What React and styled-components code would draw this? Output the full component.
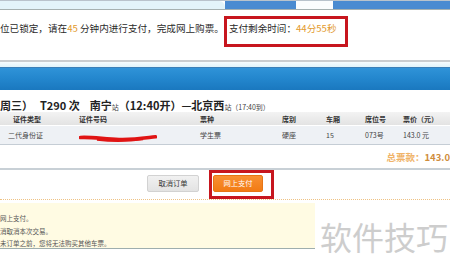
import styled, { createGlobalStyle } from "styled-components";

const GlobalStyle = createGlobalStyle`
  body {
    margin: 0;
    background: #fff;
    font-family: "Noto Sans CJK SC", "Noto Sans", sans-serif;
    color: #333;
    overflow: hidden;
  }
`;

const Page = styled.div`
  width: 450px;
  height: 271px;
  overflow: hidden;
`;

const TopBar = styled.div`
  display: flex;
  height: 8px;
  border-top: 1px solid #b9c3cc;
  border-bottom: 1px solid #a6b1b1;
`;

const Seg = styled.div`
  width: ${(p) => (p.$w ? `${p.$w}px` : "auto")};
  flex: ${(p) => (p.$w ? "none" : "1")};
  background: ${(p) => p.$bg};
  border-top-right-radius: ${(p) => (p.$round ? "6px" : "0")};
`;

const Notice = styled.div`
  display: flex;
  align-items: flex-start;
  height: 44px;
  padding-top: 6px;
  font-size: 9.6px;
  line-height: 10px;
  white-space: nowrap;
  color: #2a2a2a;
`;

const Plain = styled.span`
  margin-top: 7px;
`;

const Hl = styled.span`
  color: #e39a2e;
`;

const RedBox = styled.div`
  box-sizing: border-box;
  width: ${(p) => p.$w}px;
  height: ${(p) => p.$h}px;
  border: 3px solid #c7161e;
  padding: ${(p) => p.$pad};
`;

const GreyLine = styled.div`
  height: 2px;
  background: #c9cdd0;
`;

const LightBand = styled.div`
  height: 5px;
  background: linear-gradient(#f6fcfe, #dff3fa);
`;

const BlueBar = styled.div`
  height: 23px;
  border-top: 1px solid #3a7fb8;
  box-sizing: border-box;
  background: linear-gradient(#2f93d8, #2386cd 50%, #1a78bf);
`;

const Title = styled.div`
  display: flex;
  align-items: baseline;
  height: 22px;
  padding-top: 7px;
  box-sizing: border-box;
  font-size: 11px;
  font-weight: 700;
  color: #222;
  white-space: nowrap;
`;

const Small = styled.span`
  font-size: 7px;
  font-weight: 400;
  color: #444;
`;

const Gap = styled.span`
  display: inline-block;
  width: ${(p) => p.$w}px;
`;

const Grid = styled.div`
  display: grid;
  grid-template-columns: 71px 121px 82px 44px 39px 38px 1fr;
  align-items: center;
  padding-left: 8px;
  font-size: 7px;
  white-space: nowrap;
`;

const HeadRow = styled(Grid)`
  height: 13px;
  background: linear-gradient(#f3f3f3, #e3e3e3);
  font-weight: 700;
  color: #333;
`;

const DataRow = styled(Grid)`
  height: 18px;
  background: #eef1f5;
  border-top: 1px solid #fff;
  border-bottom: 1px solid #c5cdd5;
  color: #444;
`;

const Cell = styled.div`
  padding-left: ${(p) => p.$pl || 0}px;
`;

const Scribble = styled.svg`
  display: block;
  margin-top: 6px;
`;

const TotalRow = styled.div`
  display: flex;
  justify-content: flex-end;
  align-items: center;
  height: 23px;
  border-bottom: 2px solid #c8d0d6;
  font-size: 9.5px;
  font-weight: 700;
  white-space: nowrap;
`;

const TotalLabel = styled.span`
  color: #f0b46a;
`;

const TotalValue = styled.span`
  color: #cf8d3c;
`;

const ButtonRow = styled.div`
  display: flex;
  justify-content: center;
  align-items: flex-start;
  gap: 10px;
  height: 29px;
  padding-right: 29px;
  border-bottom: 1px dotted #efc283;
`;

const Button = styled.button`
  display: block;
  box-sizing: border-box;
  width: ${(p) => p.$w}px;
  height: 17px;
  margin-top: ${(p) => p.$mt || 0}px;
  padding: 0;
  border: 1px solid ${(p) => (p.$primary ? "#e77515" : "#d2d2d2")};
  border-radius: 2px;
  background: ${(p) => (p.$primary ? "linear-gradient(#f89033, #f27b14)" : "linear-gradient(#f1f1f1, #e3e3e3)")};
  color: ${(p) => (p.$primary ? "#fff" : "#333")};
  font-family: inherit;
  font-size: 7.3px;
  line-height: 15px;
`;

const Bottom = styled.div`
  display: flex;
  margin-top: 3px;
`;

const InfoBox = styled.div`
  width: 315px;
  height: 46px;
  padding-top: 9px;
  box-sizing: border-box;
  background: #fffbe3;
  border-bottom: 1px solid #9eaeae;
  font-size: 6.5px;
  line-height: 12.5px;
  color: #555;
  white-space: nowrap;
`;

const Watermark = styled.div`
  flex: 1;
  padding: 16px 0 0 5px;
  font-size: 32px;
  line-height: 34px;
  color: #cdcdcd;
  white-space: nowrap;
`;

const headers = ["证件类型", "证件号码", "票种", "席别", "车厢", "席位号", "票价（元）"];

export default function App() {
  return (
    <Page>
      <GlobalStyle />
      <TopBar>
        <Seg $w={225} $bg="#e3f4fa" $round />
        <Seg $w={71} $bg="#4a8bd1" />
        <Seg $w={37} $bg="#fbfdfe" />
        <Seg $bg="#4a8bd1" />
      </TopBar>

      <Notice>
        <Plain>
          位已锁定，请在<Hl>45</Hl> 分钟内进行支付，完成网上购票。
        </Plain>
        <RedBox $w={124} $h={31} $pad="4px 0 0 2px">
          支付剩余时间：<Hl>44分55秒</Hl>
        </RedBox>
      </Notice>

      <GreyLine />
      <LightBand />
      <BlueBar />

      <Title>
        周三）<Gap $w={7} />T290 次<Gap $w={10} />南宁<Small>站</Small>（12:40开）—北京西<Small>站（17:40到）</Small>
      </Title>

      <HeadRow>
        {headers.map((h, i) => (
          <Cell key={h} $pl={i === 0 ? 5 : 0}>
            {h}
          </Cell>
        ))}
      </HeadRow>
      <DataRow>
        <Cell>二代身份证</Cell>
        <Cell>
          <Scribble width="78" height="9" viewBox="0 0 78 9">
            <path
              d="M1.5 3.5 C 12 2.8, 25 5, 40 5.5 S 66 4, 76.5 2.8"
              stroke="#e01414"
              strokeWidth="3.6"
              strokeLinecap="round"
              fill="none"
            />
            <path d="M18 5.5 C 33 7.2, 50 7, 64 5" stroke="#e01414" strokeWidth="2.4" fill="none" />
          </Scribble>
        </Cell>
        <Cell>学生票</Cell>
        <Cell>硬座</Cell>
        <Cell>15</Cell>
        <Cell>073号</Cell>
        <Cell>143.0 元</Cell>
      </DataRow>

      <TotalRow>
        <TotalLabel>总票款：</TotalLabel>
        <TotalValue>143.0</TotalValue>
      </TotalRow>

      <ButtonRow>
        <Button $w={52} $mt={5}>取消订单</Button>
        <RedBox $w={65} $h={29} $pad="2px 0 0 1px">
          <Button $w={50} $primary>网上支付</Button>
        </RedBox>
      </ButtonRow>

      <Bottom>
        <InfoBox>
          <div>网上支付。</div>
          <div>消取消本次交易。</div>
          <div>未订单之前，您将无法购买其他车票。</div>
        </InfoBox>
        <Watermark>软件技巧</Watermark>
      </Bottom>
    </Page>
  );
}
